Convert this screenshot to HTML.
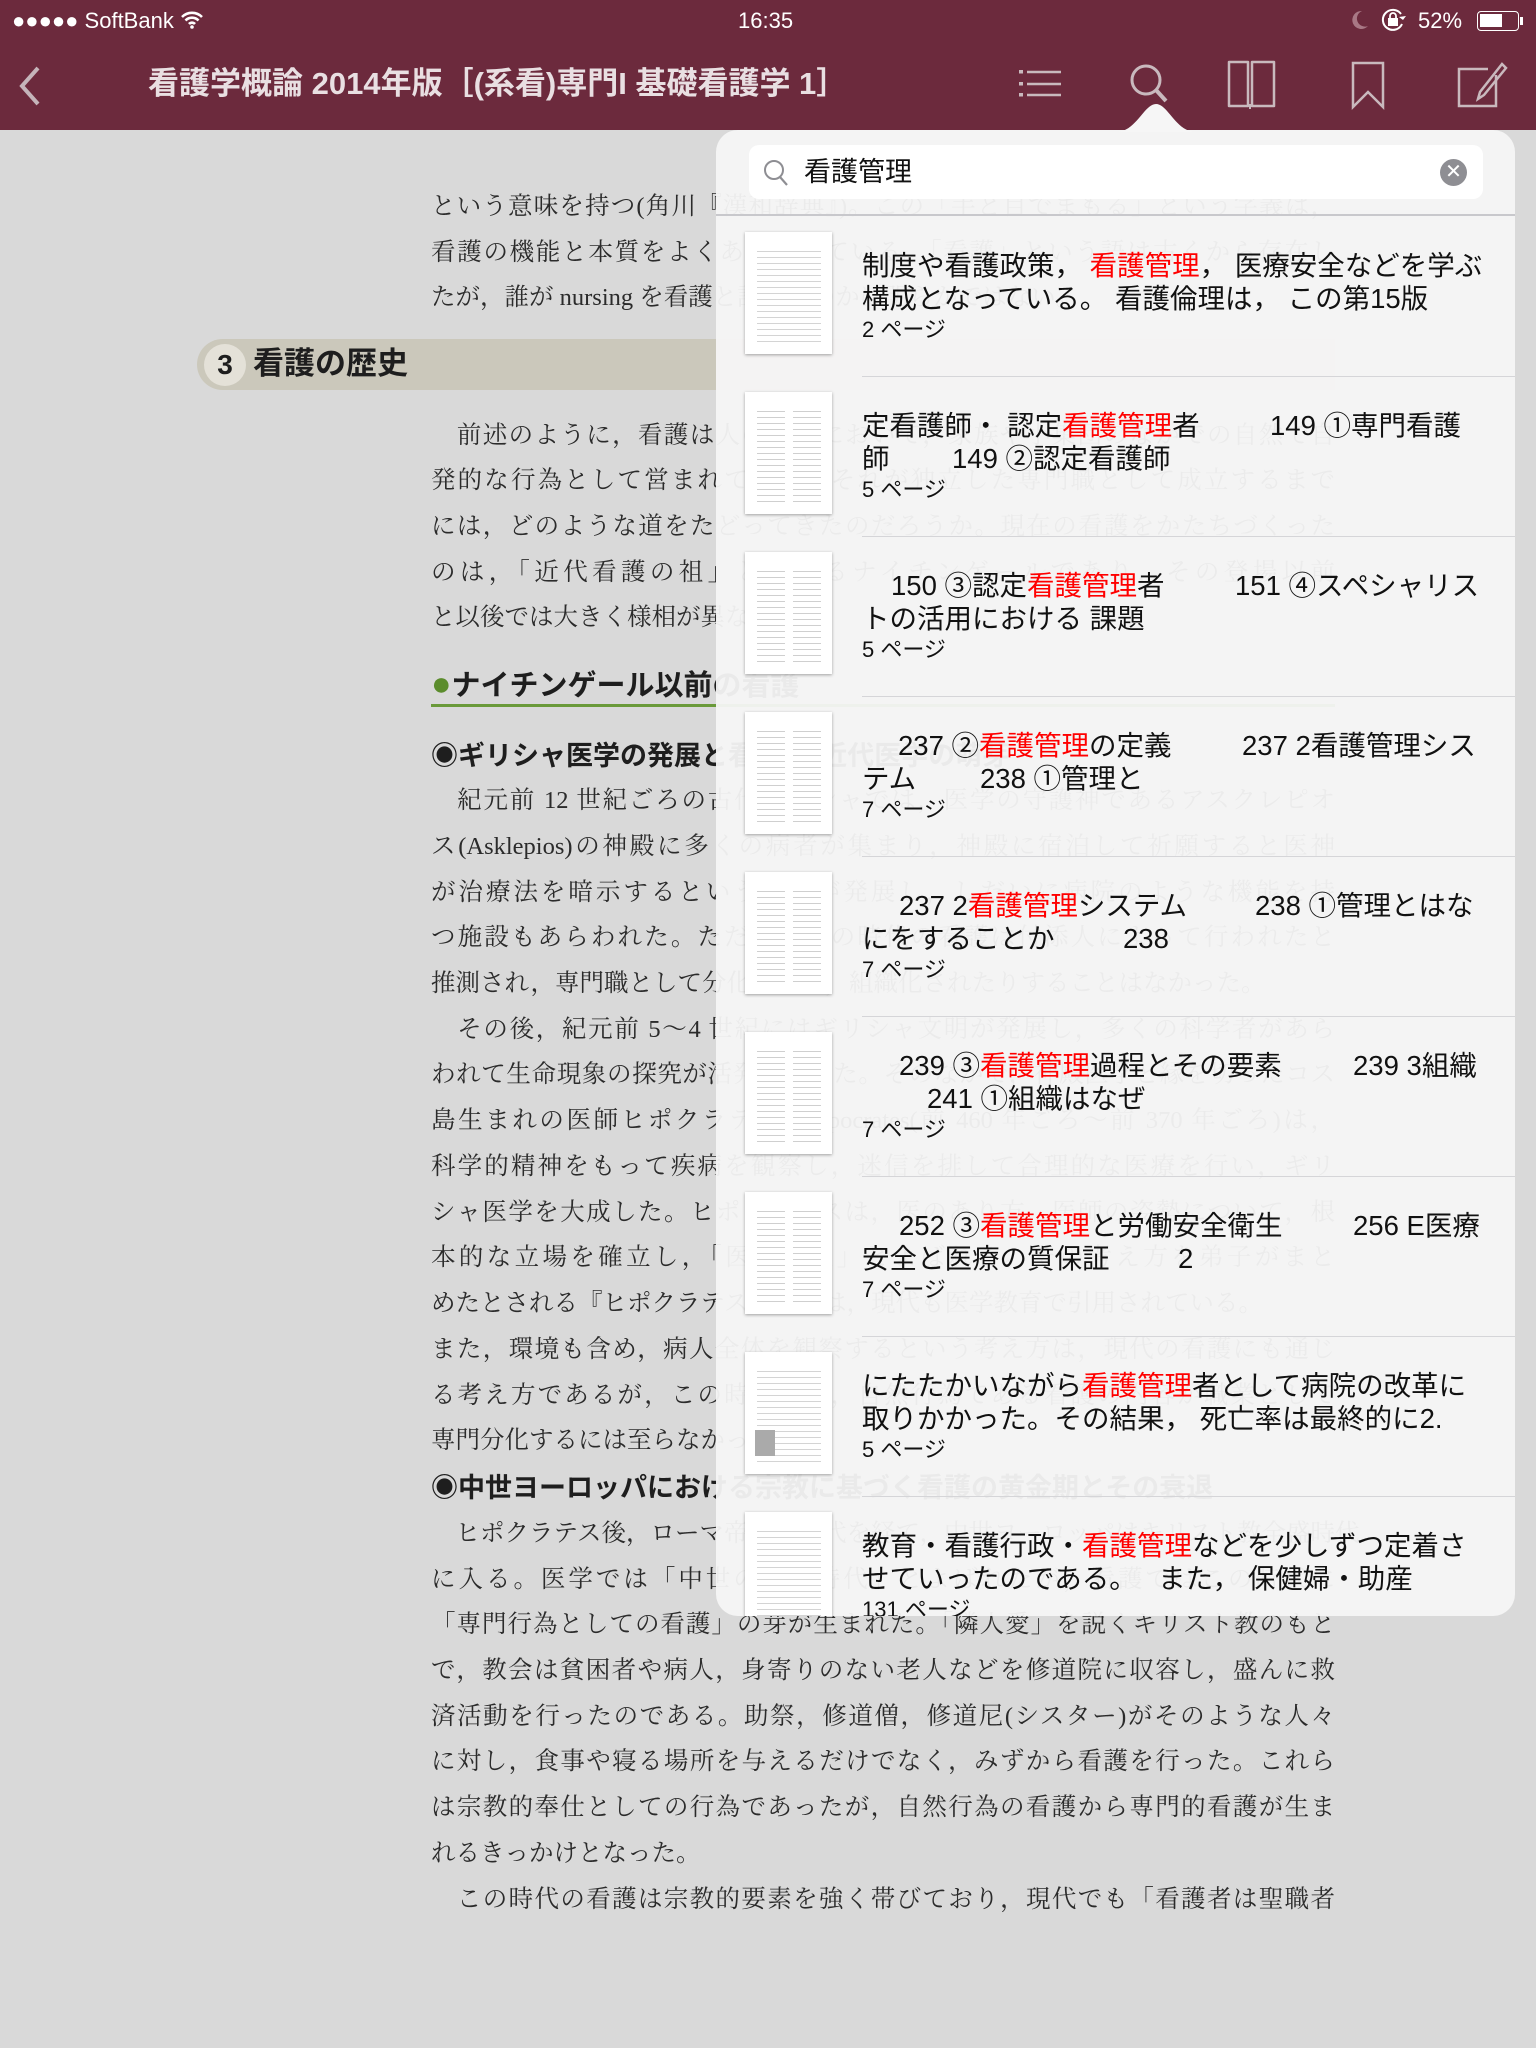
<!DOCTYPE html>
<html><head><meta charset="utf-8"><style>
*{margin:0;padding:0;box-sizing:border-box}
body{width:1536px;height:2048px;background:#d9d9d9;position:relative;overflow:hidden;font-family:"Liberation Sans","Noto Sans CJK JP",sans-serif}
.bar{position:absolute;left:0;top:0;width:1536px;height:130px;background:#6c2a3d}
.sb{position:absolute;top:6px;color:#fff;font-size:22px;line-height:30px}
.title{position:absolute;left:148px;top:62px;color:#e9dfe2;font-size:31px;font-weight:bold;line-height:44px;white-space:nowrap}
.body{position:absolute;left:431px;width:904px;font-family:"Liberation Serif","Noto Serif CJK JP","Noto Serif CJK SC",serif;font-size:24.5px;color:#2b2b2b}
.l{position:absolute;left:0;width:904px;height:40px;line-height:40px;white-space:nowrap;text-align:justify;text-align-last:justify}
.s{text-align-last:left}
.h{font-family:"Liberation Sans","Noto Sans CJK JP",sans-serif;font-weight:bold;font-size:27px;color:#1e1e1e;text-align-last:left}
.pop{position:absolute;left:716px;top:130px;width:799px;height:1486px;background:rgba(246,246,246,0.95);border-radius:22px;overflow:hidden}
.row{position:absolute;left:0;width:799px;height:160px}
.thumb{position:absolute;left:29px;top:15px;width:87px;height:122px;background:#fff;box-shadow:0 1px 3px rgba(0,0,0,.35);
background-image:repeating-linear-gradient(180deg,transparent 0 5px,#d4d4d4 5px 6px);background-size:64px 100px;background-position:12px 14px;background-repeat:no-repeat}
.thumb.two{background-image:repeating-linear-gradient(180deg,transparent 0 5px,#cfcfcf 5px 6px),repeating-linear-gradient(180deg,transparent 0 5px,#cfcfcf 5px 6px);background-size:28px 100px,28px 100px;background-position:12px 14px,48px 14px;background-repeat:no-repeat}
.txt{position:absolute;left:146px;top:32px;font-size:27.5px;line-height:33px;color:#111;white-space:nowrap}
.txt div{position:relative;height:33px}
.txt span.a{position:absolute;top:0}
.r{color:#f00}
.pg{font-size:22px;line-height:30px}
.sep{position:absolute;left:146px;right:0;bottom:0;height:1.5px;background:#d5d5d8}
</style></head><body>
<div class="bar"></div>
<div class="sb" style="left:12px">●●●●● SoftBank <svg width="24" height="20" viewBox="0 0 24 20" style="vertical-align:-2px"><path d="M2 7a14 14 0 0 1 20 0M5.5 10.5a9 9 0 0 1 13 0M9 14a4 4 0 0 1 6 0" stroke="#fff" stroke-width="2.6" fill="none"/><circle cx="12" cy="17" r="1.8" fill="#fff"/></svg></div>
<div class="sb" style="left:738px">16:35</div>
<div class="sb" style="left:1350px"><svg width="20" height="22" viewBox="0 0 20 22" style="vertical-align:-3px"><path d="M12 2a9 9 0 1 0 6 15a8 8 0 0 1-6-15z" fill="#a87885"/></svg></div>
<div class="sb" style="left:1381px"><svg width="26" height="24" viewBox="0 0 26 24" style="vertical-align:-4px"><path d="M20 6a10 10 0 1 0 1 10" stroke="#fff" stroke-width="2" fill="none"/><path d="M18 9l4 3 3-4z" fill="#fff"/><rect x="7" y="10" width="10" height="8" fill="#fff"/><path d="M9 10V8a3 3 0 0 1 6 0v2" stroke="#fff" stroke-width="1.8" fill="none"/></svg></div>
<div class="sb" style="left:1418px">52%</div>
<div style="position:absolute;left:1477px;top:11px;width:42px;height:20px;border:1.5px solid #fff;border-radius:4px"><div style="position:absolute;left:2px;top:2px;width:22px;height:13px;background:#fff"></div></div>
<div style="position:absolute;left:1520px;top:17px;width:3px;height:8px;background:#fff"></div>
<svg style="position:absolute;left:14px;top:64px" width="30" height="44" viewBox="0 0 30 44"><path d="M24 4L8 22l16 18" stroke="#c5b4ba" stroke-width="4" fill="none"/></svg>
<div class="title">看護学概論 2014年版［(系看)専門I 基礎看護学 1］</div>
<svg style="position:absolute;left:1010px;top:60px" width="510" height="72" viewBox="1010 60 510 72" fill="none" stroke="#c9b9be" stroke-width="3">
<rect x="1019" y="70" width="4" height="3.5" fill="#c9b9be" stroke="none"/><rect x="1019" y="82" width="4" height="3.5" fill="#c9b9be" stroke="none"/><rect x="1019" y="93" width="4" height="3.5" fill="#c9b9be" stroke="none"/>
<path d="M1027 72h34M1027 84h34M1027 95h34" stroke-width="2.5"/>
<circle cx="1146" cy="80" r="14"/><path d="M1156 90l10 11" stroke-width="4"/>
<path d="M1229 62h19v44h-19zM1252 62h22v44h-22z" stroke-width="2.5" stroke-linejoin="round"/><path d="M1250 104v5" stroke-width="2"/>
<path d="M1353 63h30v44l-15-15-15 15z" stroke-width="2.5"/>
<path d="M1488 69h-29v37h37v-31" stroke-width="2.5"/><path d="M1502 64l-22 28-2 7 6-4 22-27z" stroke-width="2.5"/>
</svg>
<svg style="position:absolute;left:1116px;top:100px" width="80" height="32" viewBox="0 0 80 32"><path d="M0 32C20 32 28 4 40 4S60 32 80 32z" fill="#f6f6f6"/></svg>

<div class="body" style="top:2px">
<div class="l" style="top:185px">という意味を持つ(角川『漢和辞典』)。この「手と目でまもる」という字義は，</div>
<div class="l" style="top:231px">看護の機能と本質をよくあらわしている。「看護」という語は古くから存在し</div>
<div class="l s" style="top:276px">たが，誰が nursing を看護と訳したのかは明らかではない。</div>
<div class="l" style="top:414px">　前述のように，看護は人の営みにおいて，家族や小集団のなかでの自然で自</div>
<div class="l" style="top:459px">発的な行為として営まれてきた。それが独立した専門職として成立するまで</div>
<div class="l" style="top:505px">には，どのような道をたどってきたのだろうか。現在の看護をかたちづくった</div>
<div class="l" style="top:551px">のは，「近代看護の祖」とされるナイチンゲールであり，その登場以前</div>
<div class="l s" style="top:596px">と以後では大きく様相が異なる。</div>
<div class="l h" style="top:662px;font-size:29px"><span style="color:#5b8c2c;font-size:34px">●</span>ナイチンゲール以前の看護</div>
<div style="position:absolute;left:0;top:702px;width:904px;height:3px;background:#6a9a3a"></div>
<div class="l h" style="top:734px">◉ギリシャ医学の発展と看護──近代医学の萌芽</div>
<div class="l" style="top:779px">　紀元前 12 世紀ごろの古代ギリシャでは，医学の守護神であるアスクレピオ</div>
<div class="l" style="top:825px">ス(Asklepios)の神殿に多くの病者が集まり，神殿に宿泊して祈願すると医神</div>
<div class="l" style="top:871px">が治療法を暗示するという信仰が発展し，しだいに病院のような機能を持</div>
<div class="l" style="top:916px">つ施設もあらわれた。ただし，この時代の看護は付添人によって行われたと</div>
<div class="l s" style="top:962px">推測され，専門職として分化したり，組織化されたりすることはなかった。</div>
<div class="l" style="top:1008px">　その後，紀元前 5～4 世紀にはギリシャ文明が発展し，多くの科学者があら</div>
<div class="l" style="top:1053px">われて生命現象の探究が活発になった。そのなかで，神殿医学と縁を切ったコス</div>
<div class="l" style="top:1099px">島生まれの医師ヒポクラテス Hippocrates(前 460 年ごろ～前 370 年ごろ)は，</div>
<div class="l" style="top:1145px">科学的精神をもって疾病を観察し，迷信を排して合理的な医療を行い，ギリ</div>
<div class="l" style="top:1191px">シャ医学を大成した。ヒポクラテスは，医のあり方，医師の姿勢について，根</div>
<div class="l" style="top:1236px">本的な立場を確立し，「医学の父」とよばれる。その考え方を弟子がまと</div>
<div class="l s" style="top:1282px">めたとされる『ヒポクラテス全集』は，現代も医学教育で引用されている。</div>
<div class="l" style="top:1328px">また，環境も含め，病人全体を観察するという考え方は，現代の看護にも通じ</div>
<div class="l" style="top:1374px">る考え方であるが，この時代には，自然行為である看護の内容が職業として</div>
<div class="l s" style="top:1419px">専門分化するには至らなかった。</div>
<div class="l h" style="top:1466px">◉中世ヨーロッパにおける宗教に基づく看護の黄金期とその衰退</div>
<div class="l" style="top:1512px">　ヒポクラテス後，ローマ帝国の時代を経て，中世ヨーロッパはキリスト教全盛時代</div>
<div class="l" style="top:1558px">に入る。医学では「中世の暗黒時代」とよばれたが，看護ではこの時代に</div>
<div class="l" style="top:1603px">「専門行為としての看護」の芽が生まれた。「隣人愛」を説くキリスト教のもと</div>
<div class="l" style="top:1649px">で，教会は貧困者や病人，身寄りのない老人などを修道院に収容し，盛んに救</div>
<div class="l" style="top:1695px">済活動を行ったのである。助祭，修道僧，修道尼(シスター)がそのような人々</div>
<div class="l" style="top:1740px">に対し，食事や寝る場所を与えるだけでなく，みずから看護を行った。これら</div>
<div class="l" style="top:1786px">は宗教的奉仕としての行為であったが，自然行為の看護から専門的看護が生ま</div>
<div class="l s" style="top:1832px">れるきっかけとなった。</div>
<div class="l" style="top:1878px">　この時代の看護は宗教的要素を強く帯びており，現代でも「看護者は聖職者</div>
</div>
<div style="position:absolute;left:197px;top:339px;width:1138px;height:51px;background:#cbc8bb;border-radius:26px 0 0 26px"></div>
<div style="position:absolute;left:204px;top:344px;width:42px;height:42px;border-radius:50%;background:#e4e1d8;font-weight:bold;font-size:28px;line-height:42px;text-align:center;color:#1e1e1e">3</div>
<div style="position:absolute;left:253px;top:342px;font-size:31px;font-weight:bold;line-height:44px;color:#1e1e1e">看護の歴史</div>

<div class="pop">
<div style="position:absolute;left:33px;top:15px;width:734px;height:54px;background:#fff;border-radius:10px"></div>
<svg style="position:absolute;left:46px;top:28px" width="28" height="30" viewBox="0 0 28 30"><circle cx="12" cy="12" r="9" stroke="#8e8e93" stroke-width="2" fill="none"/><path d="M18 19l7 8" stroke="#8e8e93" stroke-width="2.2"/></svg>
<div style="position:absolute;left:88px;top:22px;font-size:27px;line-height:40px;color:#111">看護管理</div>
<div style="position:absolute;left:724px;top:29px;width:27px;height:27px;border-radius:50%;background:#8e8e93;color:#fff;font-size:20px;line-height:27px;text-align:center">✕</div>
<div style="position:absolute;left:0;right:0;top:84px;height:2px;background:#c8c8cc"></div>

<div class="row" style="top:87px"><div class="thumb"></div><div class="txt"><div>制度や看護政策， <span class="r">看護管理</span>， 医療安全などを学ぶ</div><div>構成となっている。 看護倫理は， この第15版</div><div class="pg">2 ページ</div></div><div class="sep"></div></div>
<div class="row" style="top:247px"><div class="thumb two"></div><div class="txt"><div>定看護師・ 認定<span class="r">看護管理</span>者<span class="a" style="left:408px">149 ①専門看護</span></div><div>師<span class="a" style="left:90px">149 ②認定看護師</span></div><div class="pg">5 ページ</div></div><div class="sep"></div></div>
<div class="row" style="top:407px"><div class="thumb two"></div><div class="txt"><div><span class="a" style="left:29px">150 ③認定<span class="r">看護管理</span>者</span><span class="a" style="left:373px">151 ④スペシャリス</span></div><div>トの活用における 課題</div><div class="pg">5 ページ</div></div><div class="sep"></div></div>
<div class="row" style="top:567px"><div class="thumb two"></div><div class="txt"><div><span class="a" style="left:36px">237 ②<span class="r">看護管理</span>の定義</span><span class="a" style="left:380px">237 2看護管理シス</span></div><div>テム<span class="a" style="left:118px">238 ①管理と</span></div><div class="pg">7 ページ</div></div><div class="sep"></div></div>
<div class="row" style="top:727px"><div class="thumb two"></div><div class="txt"><div><span class="a" style="left:37px">237 2<span class="r">看護管理</span>システム</span><span class="a" style="left:393px">238 ①管理とはな</span></div><div>にをすることか<span class="a" style="left:261px">238</span></div><div class="pg">7 ページ</div></div><div class="sep"></div></div>
<div class="row" style="top:887px"><div class="thumb two"></div><div class="txt"><div><span class="a" style="left:37px">239 ③<span class="r">看護管理</span>過程とその要素</span><span class="a" style="left:491px">239 3組織</span></div><div><span class="a" style="left:65px">241 ①組織はなぜ</span></div><div class="pg">7 ページ</div></div><div class="sep"></div></div>
<div class="row" style="top:1047px"><div class="thumb two"></div><div class="txt"><div><span class="a" style="left:37px">252 ③<span class="r">看護管理</span>と労働安全衛生</span><span class="a" style="left:491px">256 E医療</span></div><div>安全と医療の質保証<span class="a" style="left:316px">2</span></div><div class="pg">7 ページ</div></div><div class="sep"></div></div>
<div class="row" style="top:1207px"><div class="thumb"><div style="position:absolute;left:10px;top:78px;width:20px;height:26px;background:#aaa"></div></div><div class="txt"><div>にたたかいながら<span class="r">看護管理</span>者として病院の改革に</div><div>取りかかった。その結果， 死亡率は最終的に2.</div><div class="pg">5 ページ</div></div><div class="sep"></div></div>
<div class="row" style="top:1367px"><div class="thumb"></div><div class="txt"><div>教育・看護行政・<span class="r">看護管理</span>などを少しずつ定着さ</div><div>せていったのである。　 また， 保健婦・助産</div><div class="pg">131 ページ</div></div></div>
</div>
</body></html>
